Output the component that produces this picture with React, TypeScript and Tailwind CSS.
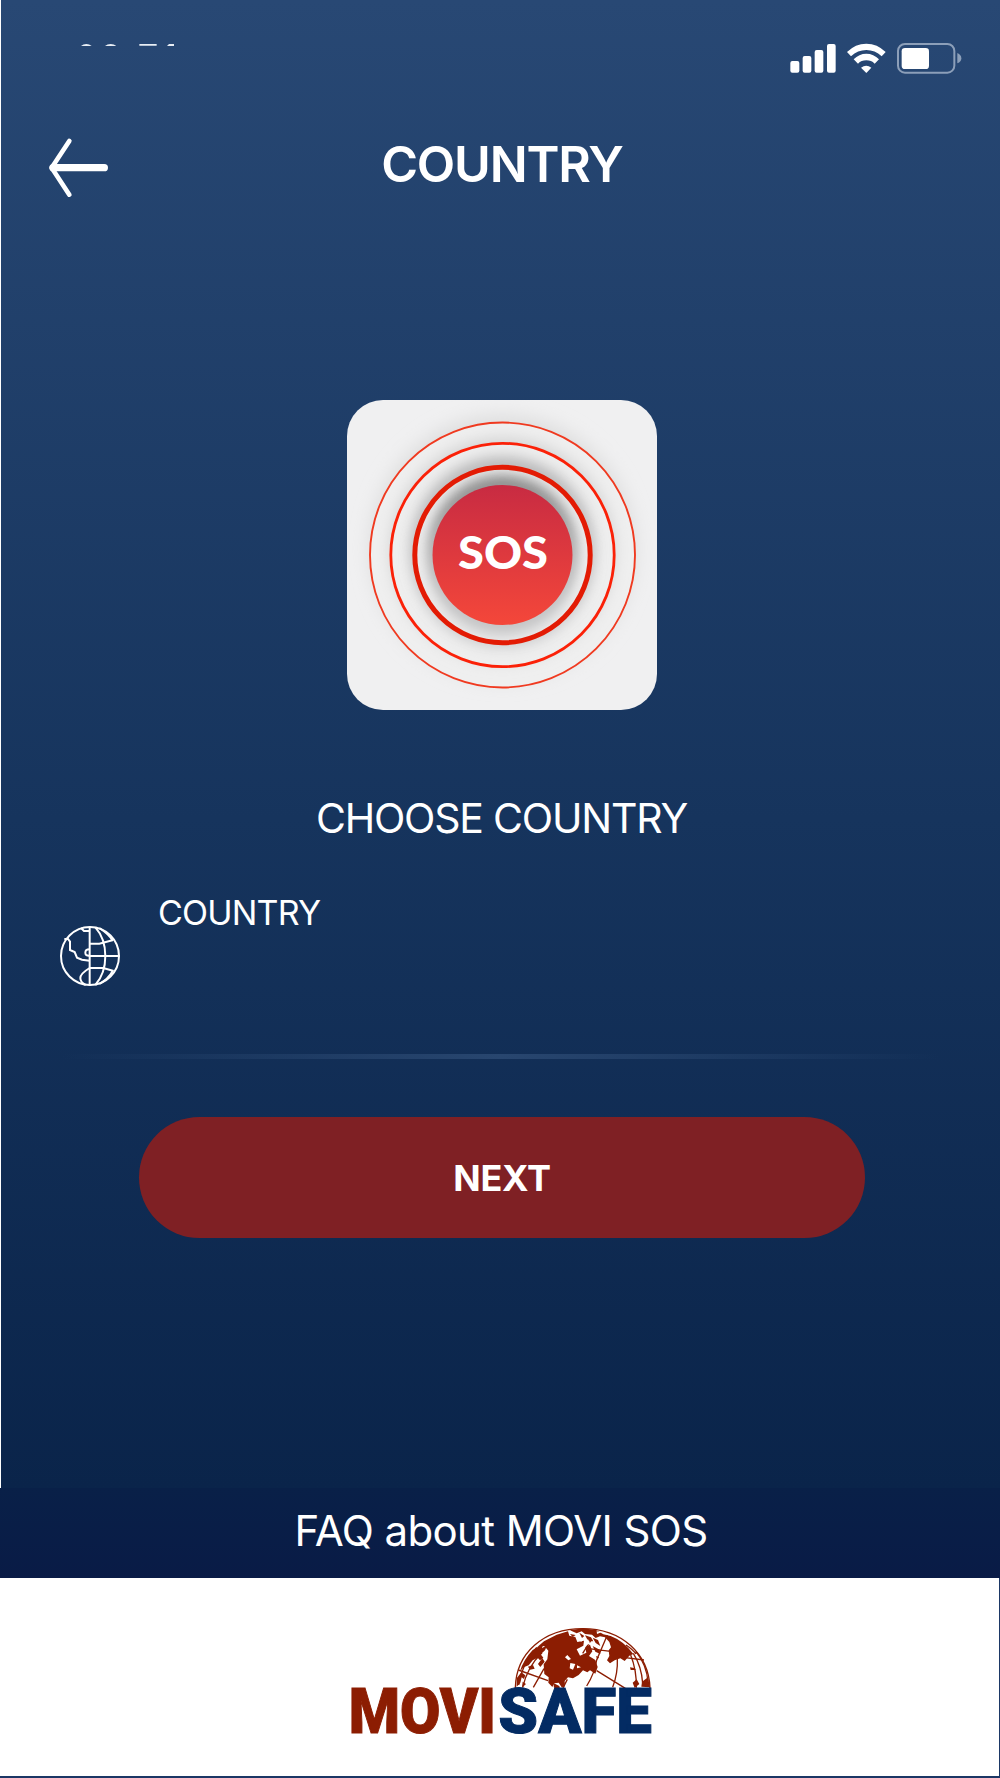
import React from 'react';

const StatusBar = () => (
  <div className="flex h-[110px] items-start justify-between pl-[78px] pr-[38px] pt-[40px]">
    {/* Only the upper edge of the clock is visible */}
    <svg className="mt-[2px] h-[6px] w-[100px]" viewBox="237 126 300 18" fill="#e8eef5">
      <path d="M243 138q7-6 16-6t16 6zM315 138q7-6 17-6t17 6zM418 132h52v5h-52zM507 132h15v6h-21z" />
    </svg>
    <svg className="h-[36px] w-[174px]" viewBox="144 60 522 108" fill="#ffffff">
      <rect x="151" y="123" width="27" height="35" rx="6" />
      <rect x="188" y="108" width="26" height="50" rx="6" />
      <rect x="224" y="90" width="26" height="68" rx="6" />
      <rect x="261" y="72" width="26" height="86" rx="6" />
      <path d="M321 96Q346 71 379 71T437 96L425 109Q405 90 379 90T333 109Z" />
      <path d="M341 118Q357 101 379 101T417 118L404 131Q394 121 379 121T354 131Z" />
      <path d="M363 143Q379 131 394 143L379 159Z" />
      <rect x="474" y="72" width="169" height="86" rx="21" fill="none" stroke="#8c9fb9" strokeWidth="6" />
      <rect x="485" y="84" width="82" height="63" rx="10" />
      <path d="M652 99Q664 104 664 115T652 130Z" fill="#8c9fb9" />
    </svg>
  </div>
);

const SosBadge = () => (
  <svg className="ml-px h-[310px] w-[310px]" viewBox="0 0 310 310">
    <defs>
      <linearGradient id="sosFill" x1="0" y1="0" x2="0" y2="1">
        <stop offset="0" stopColor="#c82b42" />
        <stop offset="1" stopColor="#f4473a" />
      </linearGradient>
      <filter id="soft" x="-30%" y="-30%" width="160%" height="160%">
        <feGaussianBlur stdDeviation="7" />
      </filter>
      <filter id="softer" x="-30%" y="-30%" width="160%" height="160%">
        <feGaussianBlur stdDeviation="9" />
      </filter>
      <clipPath id="innerRing">
        <circle cx="155.5" cy="155" r="88" />
      </clipPath>
    </defs>
    <rect width="310" height="310" rx="36" fill="#f0f0f1" />
    <circle cx="155.5" cy="148" r="133" fill="#dedede" filter="url(#softer)" />
    <circle cx="155.5" cy="155" r="132" fill="#efefef" />
    <circle cx="155.5" cy="150" r="113" fill="#d6d6d6" filter="url(#soft)" />
    <circle cx="155.5" cy="155" r="111" fill="#eeeeee" />
    <circle cx="155.5" cy="148" r="91" fill="#b5b5b6" filter="url(#soft)" />
    <circle cx="155.5" cy="160" r="88" fill="#d2d2d3" filter="url(#soft)" />
    <circle cx="155.5" cy="155" r="88" fill="#ececec" />
    <g clipPath="url(#innerRing)">
      <circle cx="155.5" cy="148" r="72" fill="#828282" filter="url(#soft)" />
      <circle cx="155.5" cy="163" r="72" fill="#c6c6c7" filter="url(#soft)" />
    </g>
    <circle cx="155.5" cy="155" r="132.5" fill="none" stroke="#f03a20" strokeWidth="1.9" />
    <circle cx="155.5" cy="155" r="111.7" fill="none" stroke="#fb2108" strokeWidth="2.8" />
    <circle cx="155.5" cy="155" r="87.7" fill="none" stroke="#e31b04" strokeWidth="5" />
    <circle cx="155.5" cy="155" r="70" fill="url(#sosFill)" />
    <text x="111" y="169" fontSize="46" textLength="90" lengthAdjust="spacingAndGlyphs" fill="#fff" className="font-[Lato,sans-serif] font-black">
      SOS
    </text>
  </svg>
);

const CountryGlobe = () => (
  <svg className="h-[62px] w-[62px]" viewBox="57 136 186 186" fill="none" stroke="#fff" strokeWidth="6">
    <circle cx="150" cy="229" r="87" />
    <path d="M149 141V318M149 229H238M149 192H178L220 181M149 265H190L221 274M166 143Q196 176 196 229T166 316M178 145Q207 164 218 183M218 274Q205 298 178 313" />
    <path d="M73 178H84L90 186V211L104 217L111 234L126 240L149 243M123 145L132 154H149M149 209Q136 209 136 219T149 228M149 265Q121 282 121 295T137 316" />
  </svg>
);

const Logo = () => (
  <svg className="h-[140px] w-[320px]" viewBox="0 0 960 420">
    <g fill="none" stroke="#8c1d02" strokeWidth="4">
      <path d="M526 234C528 130 610 56 728 56S926 132 930 234" />
      <path d="M535 180L624 212M548 232Q562 170 606 128M580 232L612 176M668 236L682 208M740 228Q764 190 770 150L802 75M770 182L856 235M818 232Q834 190 832 145M740 115L812 124M850 142L912 150M728 130L752 92M536 225Q546 160 590 112" />
      <path d="M872 135Q890 180 889 233M880 130Q905 170 908 220M888 125Q920 165 924 215M858 105Q880 120 888 132" />
    </g>
    <g fill="#8c1d02">
      <path d="M612 94L650 74L684 64L688 77L706 81L712 96L732 92L730 107L710 118L720 137L739 128L736 111L750 104L757 124L747 138L766 150L773 171L766 191L750 181L742 187L729 181L716 195L699 205L684 202L674 213L675 229L665 232L656 218L643 220L637 231L625 218L626 202L613 192L611 163L622 148L625 122L613 108L592 111Z" />
      <path d="M578 120L610 101L606 115L622 104L615 121L602 133L610 143L600 151L593 143L578 151L566 166L551 172L540 184Q549 151 578 120Z" />
      <path d="M607 144L614 155L601 171L594 162ZM530 205L544 187L556 196L552 207L545 202L541 218L530 230ZM548 215L558 222L546 233ZM564 170L579 165L584 176L570 179Z" />
      <path d="M690 61L728 55L768 60L790 73L812 78Q850 92 880 132L868 137L854 153L841 145L824 151L810 160L801 151L808 138L806 121L813 112L808 96L795 82L780 79L767 84L756 74L735 72L725 64L710 70Z" />
      <path d="M718 68L733 78L726 84ZM735 76L753 82L760 94L745 94ZM758 83L774 90L781 108L767 99ZM758 108L779 119L781 132L766 125ZM737 116L748 119L740 127ZM690 72L707 75L698 81ZM768 138L777 142L772 149ZM870 172L882 174L888 180L872 180ZM878 218L890 208L898 222L884 234ZM906 215L924 202L930 232L904 230ZM640 219L658 228L660 236L642 233Z" />
    </g>
    <path d="M691 159L706 162L699 179L689 175ZM711 166L723 172L711 175ZM675 142L682 135L693 147L685 151ZM714 84L727 96L714 91ZM733 96L744 88L751 101L738 105ZM770 64L784 67L771 72Z" fill="#fff" />
    <g className="font-[Roboto,sans-serif] font-black" fontSize="190" strokeWidth="3">
      <text x="26" y="369" textLength="442" lengthAdjust="spacingAndGlyphs" fill="#8c1d02" stroke="#8c1d02">MOVI</text>
      <text x="475" y="369" textLength="461" lengthAdjust="spacingAndGlyphs" fill="#032b63" stroke="#032b63">SAFE</text>
    </g>
  </svg>
);

export default function App() {
  return (
    <div className="flex h-[1778px] w-[1000px] flex-col overflow-hidden font-[Inter,sans-serif] text-white">
      <main className="flex h-[1488px] flex-col border-l border-white bg-linear-to-b from-[#284874] via-[#16345d] via-55% to-[#0a244a]">
        <StatusBar />

        <header className="grid h-[110px] grid-cols-[120px_1fr_117px]">
          <button aria-label="Back" className="flex items-start pl-[46px] pt-[27px]">
            <svg className="h-[62px] w-[64px]" viewBox="141 411 192 186" fill="none" stroke="#fff" strokeLinecap="round">
              <path d="M159 503H313" strokeWidth="22" />
              <path d="M208 423L155 503L208 584" strokeWidth="14" strokeLinejoin="round" />
            </svg>
          </button>
          <h1 className="mt-[20px] text-center text-[50px] leading-[68px] font-semibold tracking-[-1.2px]">COUNTRY</h1>
        </header>

        <section className="flex flex-col items-center pl-[2px] pt-[180px]">
          <SosBadge />
          <h2 className="mt-[78px] text-[41px] leading-[60px] tracking-[-1.2px]">CHOOSE COUNTRY</h2>
        </section>

        <div className="mt-[35px] flex h-[171px] pl-[58px]">
          <div className="pt-[42px]">
            <CountryGlobe />
          </div>
          <label className="ml-[37px] mt-[10px] text-[34px] leading-[40px] tracking-[-0.8px]">COUNTRY</label>
        </div>

        <div className="mx-[60px] h-[5px] shrink-0 bg-linear-to-r from-transparent via-[#28466f] to-transparent" />

        <button className="mt-[58px] ml-[138px] flex h-[121px] w-[726px] shrink-0 items-center justify-center rounded-full bg-[#7f2024] text-[36px] font-bold tracking-[-0.3px]">
          NEXT
        </button>
      </main>

      <div className="flex h-[90px] shrink-0 items-center justify-center bg-linear-to-b from-[#092048] to-[#091b46] pb-[5px] pl-[2px] text-[42px] tracking-[-0.6px]">
        FAQ about MOVI SOS
      </div>

      <footer className="flex h-[200px] shrink-0 justify-center border-r border-b-2 border-[#1b3765] bg-white pt-[32px]">
        <Logo />
      </footer>
    </div>
  );
}
